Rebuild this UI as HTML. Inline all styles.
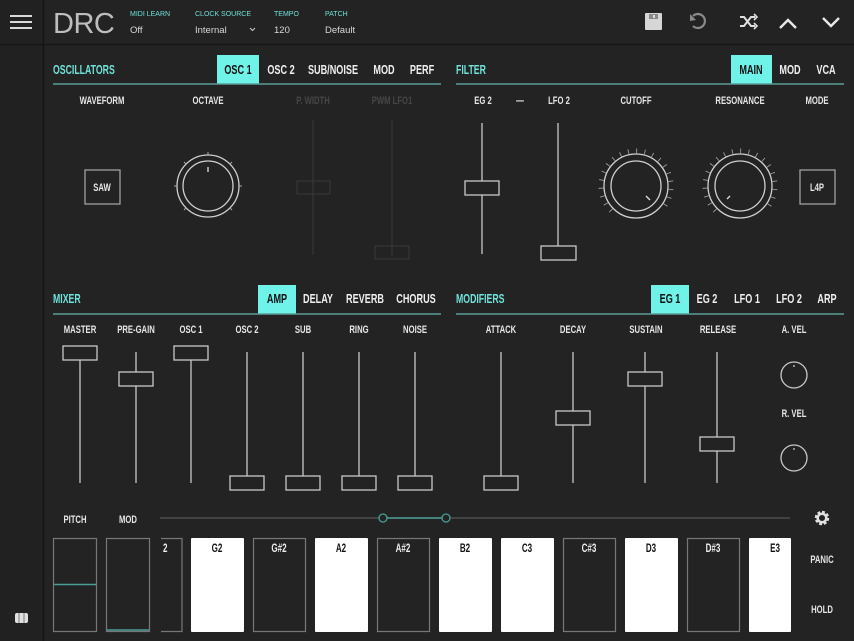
<!DOCTYPE html>
<html><head><meta charset="utf-8"><style>
html,body{margin:0;padding:0;background:#232323;}
svg{display:block}
text{font-family:"Liberation Sans",sans-serif;font-weight:bold;}
.l{fill:#e6e6e6;font-size:11px;text-anchor:middle}
.h{fill:#6fe3da;font-size:12.5px}
.d{fill:#464646;font-size:11px;text-anchor:middle}
.tb{fill:#f0f0f0;font-size:13px;text-anchor:middle}
.k{fill:#111;font-size:11.5px;text-anchor:middle}
.kd{fill:#eee;font-size:11.5px;text-anchor:middle}
text.s{font-weight:normal}
</style></head><body>
<svg width="854" height="641" viewBox="0 0 854 641" xmlns="http://www.w3.org/2000/svg">
<rect width="854" height="641" fill="#232323"/>
<rect width="43" height="641" fill="#212121"/>
<line x1="43.5" y1="0" x2="43.5" y2="641" stroke="#141414" stroke-width="1.5"/>
<line x1="0" y1="44.5" x2="854" y2="44.5" stroke="#161616" stroke-width="1.5"/>
<g stroke="#d8d8d8" stroke-width="2"><line x1="10" y1="16" x2="32" y2="16"/><line x1="10" y1="22" x2="32" y2="22"/><line x1="10" y1="28" x2="32" y2="28"/></g>
<text x="53" y="33" class="s" style="font-size:29px;fill:#bdbdbd;letter-spacing:-0.5px">DRC</text>
<g style="font-size:7px;fill:#6fe3da"><text class="s" x="130" y="16" style="fill:#6fe3da">MIDI LEARN</text><text class="s" x="195" y="16" style="fill:#6fe3da">CLOCK SOURCE</text><text class="s" x="274" y="16" style="fill:#6fe3da">TEMPO</text><text class="s" x="325" y="16" style="fill:#6fe3da">PATCH</text></g>
<g style="font-size:9.5px"><text class="s" x="130" y="33" style="fill:#d8d8d8">Off</text><text class="s" x="195" y="33" style="fill:#d8d8d8">Internal</text><text class="s" x="274" y="33" style="fill:#d8d8d8">120</text><text class="s" x="325" y="33" style="fill:#d8d8d8">Default</text></g>
<path d="M250 28 l2.5 2.5 l2.5 -2.5" stroke="#ccc" fill="none" stroke-width="1"/>
<!-- icons -->
<rect x="645" y="13" width="17" height="17" fill="#d6d6d6" rx="1"/><rect x="649" y="14" width="9" height="5" fill="#888"/><rect x="653" y="15" width="2" height="3" fill="#ddd"/>
<path d="M693 16 a7 7 0 1 1 0 10" stroke="#8a8a8a" stroke-width="2.2" fill="none"/><path d="M690 14 l0 7 l6 -1 z" fill="#8a8a8a"/>
<path d="M740 17 h4 l7 9 h4 M740 26 h4 l7 -9 h4" stroke="#e0e0e0" stroke-width="2" fill="none"/><path d="M754 14 l3 3 l-3 3 M754 23 l3 3 l-3 3" stroke="#e0e0e0" stroke-width="1.6" fill="none"/>
<path d="M780 28 l8 -8 l8 8" stroke="#e8e8e8" stroke-width="2.4" fill="none"/>
<path d="M823 18 l8 8 l8 -8" stroke="#e8e8e8" stroke-width="2.4" fill="none"/>

<!-- OSC section -->
<text transform="translate(53 74) scale(.7 1)" class="h">OSCILLATORS</text>
<rect x="217" y="55" width="42" height="29" fill="#6ff2e8"/>
<text transform="translate(238 74) scale(.7 1)" class="tb" style="fill:#111">OSC 1</text>
<text transform="translate(281 74) scale(.7 1)" class="tb">OSC 2</text><text transform="translate(333 74) scale(.7 1)" class="tb">SUB/NOISE</text><text transform="translate(384 74) scale(.7 1)" class="tb">MOD</text><text transform="translate(422 74) scale(.7 1)" class="tb">PERF</text>
<line x1="53" y1="84" x2="441" y2="84" stroke="#5a9e98" stroke-width="1.5"/>
<text transform="translate(102 104) scale(.7 1)" class="l">WAVEFORM</text><text transform="translate(208 104) scale(.7 1)" class="l">OCTAVE</text><text transform="translate(313 104) scale(.7 1)" class="d">P. WIDTH</text><text transform="translate(392 104) scale(.7 1)" class="d">PWM LFO1</text>
<rect x="85" y="170" width="35" height="34" fill="none" stroke="#aaa" stroke-width="1.2"/><text transform="translate(102 191) scale(.7 1)" class="l">SAW</text>
<g stroke="#d0d0d0" fill="none" stroke-width="1.3"><circle cx="208" cy="186" r="31"/><circle cx="208" cy="186" r="25"/></g>
<g stroke="#aaa" stroke-width="1"><line x1="208" y1="152" x2="208" y2="155"/><line x1="174" y1="186" x2="177" y2="186"/><line x1="242" y1="186" x2="239" y2="186"/><line x1="184" y1="162" x2="186" y2="164"/><line x1="232" y1="162" x2="230" y2="164"/><line x1="184" y1="210" x2="186" y2="208"/><line x1="232" y1="210" x2="230" y2="208"/></g>
<line x1="208" y1="167" x2="208" y2="172" stroke="#ddd" stroke-width="1.3"/>
<g stroke="#383838" fill="none"><line x1="313" y1="120" x2="313" y2="255"/><rect x="297" y="181" width="33" height="13"/><line x1="392" y1="120" x2="392" y2="255"/><rect x="375" y="246" width="34" height="13"/></g>

<!-- FILTER -->
<text transform="translate(456 74) scale(.7 1)" class="h">FILTER</text>
<rect x="731" y="55" width="41" height="29" fill="#6ff2e8"/>
<text transform="translate(751 74) scale(.7 1)" class="tb" style="fill:#111">MAIN</text><text transform="translate(790 74) scale(.7 1)" class="tb">MOD</text><text transform="translate(826 74) scale(.7 1)" class="tb">VCA</text>
<line x1="456" y1="84" x2="844" y2="84" stroke="#5a9e98" stroke-width="1.5"/>
<text transform="translate(483 104) scale(.7 1)" class="l">EG 2</text><text transform="translate(520 104) scale(.7 1)" class="l">—</text><text transform="translate(559 104) scale(.7 1)" class="l">LFO 2</text><text transform="translate(636 104) scale(.7 1)" class="l">CUTOFF</text><text transform="translate(740 104) scale(.7 1)" class="l">RESONANCE</text><text transform="translate(817 104) scale(.7 1)" class="l">MODE</text>
<g stroke="#c8c8c8" stroke-width="1.3" fill="#232323">
<line x1="482" y1="123" x2="482" y2="254"/><rect x="465" y="181" width="34" height="14"/>
<line x1="558" y1="123" x2="558" y2="254"/><rect x="541" y="246" width="35" height="14"/>
</g>
<g stroke="#d0d0d0" fill="none" stroke-width="1.3"><circle cx="636" cy="186" r="32"/><circle cx="636" cy="186" r="25"/></g>
<path d="M611.25 210.75 A35 35 0 1 1 660.75 210.75" stroke="#9a9a9a" stroke-width="5" fill="none" stroke-dasharray="0.9 7.35"/>
<line x1="646" y1="196" x2="650" y2="200" stroke="#ddd" stroke-width="1.3"/>
<g stroke="#d0d0d0" fill="none" stroke-width="1.3"><circle cx="740" cy="186" r="32"/><circle cx="740" cy="186" r="25"/></g>
<path d="M715.25 210.75 A35 35 0 1 1 764.75 210.75" stroke="#9a9a9a" stroke-width="5" fill="none" stroke-dasharray="0.9 7.35"/>
<line x1="730" y1="196" x2="727" y2="199" stroke="#ddd" stroke-width="1.3"/>
<rect x="800" y="170" width="35" height="34" fill="none" stroke="#aaa" stroke-width="1.2"/><text transform="translate(817 191) scale(.7 1)" class="l">L4P</text>

<!-- MIXER -->
<text transform="translate(53 303) scale(.7 1)" class="h">MIXER</text>
<rect x="258" y="285" width="38" height="29" fill="#6ff2e8"/>
<text transform="translate(277 303) scale(.7 1)" class="tb" style="fill:#111">AMP</text><text transform="translate(318 303) scale(.7 1)" class="tb">DELAY</text><text transform="translate(365 303) scale(.7 1)" class="tb">REVERB</text><text transform="translate(416 303) scale(.7 1)" class="tb">CHORUS</text>
<line x1="53" y1="314" x2="441" y2="314" stroke="#5a9e98" stroke-width="1.5"/>
<text transform="translate(80 333) scale(.7 1)" class="l">MASTER</text><text transform="translate(136 333) scale(.7 1)" class="l">PRE-GAIN</text><text transform="translate(191 333) scale(.7 1)" class="l">OSC 1</text><text transform="translate(247 333) scale(.7 1)" class="l">OSC 2</text><text transform="translate(303 333) scale(.7 1)" class="l">SUB</text><text transform="translate(359 333) scale(.7 1)" class="l">RING</text><text transform="translate(415 333) scale(.7 1)" class="l">NOISE</text>
<g stroke="#c8c8c8" stroke-width="1.3" fill="#232323">
<line x1="80" y1="352" x2="80" y2="483"/><rect x="63" y="346" width="34" height="14"/>
<line x1="136" y1="352" x2="136" y2="483"/><rect x="119" y="372" width="34" height="14"/>
<line x1="191" y1="352" x2="191" y2="483"/><rect x="174" y="346" width="34" height="14"/>
<line x1="247" y1="352" x2="247" y2="483"/><rect x="230" y="476" width="34" height="14"/>
<line x1="303" y1="352" x2="303" y2="483"/><rect x="286" y="476" width="34" height="14"/>
<line x1="359" y1="352" x2="359" y2="483"/><rect x="342" y="476" width="34" height="14"/>
<line x1="415" y1="352" x2="415" y2="483"/><rect x="398" y="476" width="34" height="14"/>
</g>

<!-- MODIFIERS -->
<text transform="translate(456 303) scale(.7 1)" class="h">MODIFIERS</text>
<rect x="651" y="285" width="38" height="29" fill="#6ff2e8"/>
<text transform="translate(670 303) scale(.7 1)" class="tb" style="fill:#111">EG 1</text><text transform="translate(707 303) scale(.7 1)" class="tb">EG 2</text><text transform="translate(747 303) scale(.7 1)" class="tb">LFO 1</text><text transform="translate(789 303) scale(.7 1)" class="tb">LFO 2</text><text transform="translate(827 303) scale(.7 1)" class="tb">ARP</text>
<line x1="456" y1="314" x2="844" y2="314" stroke="#5a9e98" stroke-width="1.5"/>
<text transform="translate(501 333) scale(.7 1)" class="l">ATTACK</text><text transform="translate(573 333) scale(.7 1)" class="l">DECAY</text><text transform="translate(646 333) scale(.7 1)" class="l">SUSTAIN</text><text transform="translate(718 333) scale(.7 1)" class="l">RELEASE</text><text transform="translate(794 333) scale(.7 1)" class="l">A. VEL</text><text transform="translate(794 417) scale(.7 1)" class="l">R. VEL</text>
<g stroke="#c8c8c8" stroke-width="1.3" fill="#232323">
<line x1="501" y1="352" x2="501" y2="483"/><rect x="484" y="476" width="34" height="14"/>
<line x1="573" y1="352" x2="573" y2="483"/><rect x="556" y="411" width="34" height="14"/>
<line x1="645" y1="352" x2="645" y2="483"/><rect x="628" y="372" width="34" height="14"/>
<line x1="717" y1="352" x2="717" y2="483"/><rect x="700" y="437" width="34" height="14"/>
<circle cx="794" cy="375" r="13"/><circle cx="794" cy="458" r="13"/>
<line x1="794" y1="365" x2="794" y2="367"/><line x1="794" y1="448" x2="794" y2="450"/>
</g>

<!-- bottom -->
<text transform="translate(75 523) scale(.7 1)" class="l">PITCH</text><text transform="translate(128 523) scale(.7 1)" class="l">MOD</text>
<line x1="160" y1="518" x2="790" y2="518" stroke="#555" stroke-width="1.3"/>
<line x1="383" y1="518" x2="446" y2="518" stroke="#4a9e96" stroke-width="1.5"/>
<circle cx="383" cy="518" r="4" fill="#232323" stroke="#4a9e96" stroke-width="1.3"/><circle cx="446" cy="518" r="4" fill="#232323" stroke="#4a9e96" stroke-width="1.3"/>
<g transform="translate(822,518)"><circle r="5.5" fill="none" stroke="#e0e0e0" stroke-width="3.5" stroke-dasharray="2.6 1.7"/><circle r="4.3" fill="none" stroke="#e0e0e0" stroke-width="2.5"/></g>
<rect x="53.5" y="538.5" width="43" height="93" fill="#232323" stroke="#777" stroke-width="1.2"/>
<line x1="54" y1="584.5" x2="96" y2="584.5" stroke="#4a9e96" stroke-width="1.5"/>
<rect x="106.5" y="538.5" width="43" height="93" fill="#232323" stroke="#777" stroke-width="1.2"/>
<line x1="107" y1="630" x2="149" y2="630" stroke="#4a9e96" stroke-width="1.5"/>
<g stroke="#777" stroke-width="1.2" fill="#232323">
<rect x="160" y="538.5" width="22" height="93"/><rect x="253.5" y="538.5" width="52" height="93"/><rect x="377.5" y="538.5" width="52" height="93"/><rect x="563.5" y="538.5" width="52" height="93"/><rect x="687.5" y="538.5" width="52" height="93"/>
</g>
<rect x="158" y="538" width="3" height="95" fill="#232323"/>
<g fill="#ffffff"><rect x="191" y="538" width="53" height="94" rx="1"/><rect x="315" y="538" width="53" height="94" rx="1"/><rect x="439" y="538" width="53" height="94" rx="1"/><rect x="501" y="538" width="53" height="94" rx="1"/><rect x="625" y="538" width="53" height="94" rx="1"/><rect x="749" y="538" width="42" height="94" rx="1"/></g>
<text transform="translate(163 552) scale(.7 1)" class="kd" style="text-anchor:start">2</text>
<text transform="translate(217 552) scale(.7 1)" class="k">G2</text><text transform="translate(279 552) scale(.7 1)" class="kd">G#2</text><text transform="translate(341 552) scale(.7 1)" class="k">A2</text><text transform="translate(403 552) scale(.7 1)" class="kd">A#2</text><text transform="translate(465 552) scale(.7 1)" class="k">B2</text><text transform="translate(527 552) scale(.7 1)" class="k">C3</text><text transform="translate(589 552) scale(.7 1)" class="kd">C#3</text><text transform="translate(651 552) scale(.7 1)" class="k">D3</text><text transform="translate(713 552) scale(.7 1)" class="kd">D#3</text><text transform="translate(775 552) scale(.7 1)" class="k">E3</text>
<text transform="translate(822 563) scale(.7 1)" class="l">PANIC</text><text transform="translate(822 613) scale(.7 1)" class="l">HOLD</text>
<rect x="15" y="613" width="13" height="10" rx="2" fill="#e0e0e0"/><line x1="19" y1="613" x2="19" y2="623" stroke="#777"/><line x1="24" y1="613" x2="24" y2="623" stroke="#777"/>
</svg>
</body></html>
